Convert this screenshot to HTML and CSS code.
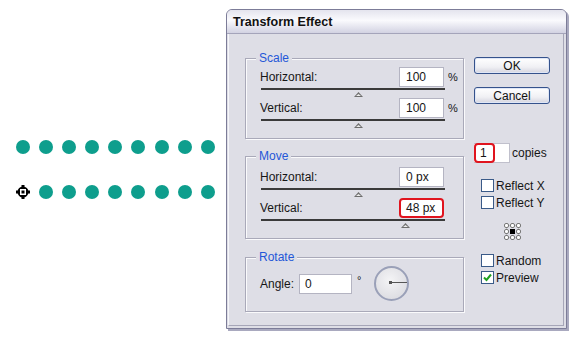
FILE: index.html
```html
<!DOCTYPE html>
<html lang="en">
<head>

    <meta charset="UTF-8">
    <meta name="viewport" content="width=device-width, initial-scale=1.0">
    <title>Transform Effect</title>

    <link rel="stylesheet" href="styles.css">

</head>

<body>

    <div class="page">

        <div class="artboard">
            <div class="dot-row">
                <span class="dot"></span><span class="dot"></span><span class="dot"></span>
                <span class="dot"></span><span class="dot"></span><span class="dot"></span>
                <span class="dot"></span><span class="dot"></span><span class="dot"></span>
            </div>
            <div class="dot-row">
                <span class="origin">
                    <svg width="14" height="14" viewBox="0 0 14 14">
                        <rect x="5.5" y="0" width="3" height="3" fill="#000"/>
                        <rect x="5.5" y="11" width="3" height="3" fill="#000"/>
                        <rect x="0" y="5.5" width="3" height="3" fill="#000"/>
                        <rect x="11" y="5.5" width="3" height="3" fill="#000"/>
                        <circle cx="7" cy="7" r="5.5" fill="#000"/>
                        <rect x="4" y="4" width="6" height="6" fill="#fff"/>
                        <rect x="5.5" y="5.5" width="3" height="3" fill="#000"/>
                    </svg>
                </span>
                <span class="dot"></span><span class="dot"></span><span class="dot"></span>
                <span class="dot"></span><span class="dot"></span><span class="dot"></span>
                <span class="dot"></span><span class="dot"></span>
            </div>
        </div>

        <div class="dialog">

            <div class="title-bar">Transform Effect</div>

            <div class="dialog-body">

                <div class="groups">

                    <div class="group scale-group">
                        <span class="legend">Scale</span>
                        <div class="field">
                            <span class="field-label">Horizontal:</span>
                            <span class="input">100</span>
                            <span class="unit">%</span>
                        </div>
                        <div class="slider"><span class="thumb" style="left: 93px;"></span></div>
                        <div class="field">
                            <span class="field-label">Vertical:</span>
                            <span class="input">100</span>
                            <span class="unit">%</span>
                        </div>
                        <div class="slider"><span class="thumb" style="left: 93px;"></span></div>
                    </div>

                    <div class="group move-group">
                        <span class="legend">Move</span>
                        <div class="field">
                            <span class="field-label">Horizontal:</span>
                            <span class="input">0 px</span>
                            <span class="unit"></span>
                        </div>
                        <div class="slider"><span class="thumb" style="left: 93px;"></span></div>
                        <div class="field">
                            <span class="field-label">Vertical:</span>
                            <span class="input marked">48 px</span>
                            <span class="unit"></span>
                        </div>
                        <div class="slider"><span class="thumb" style="left: 140px;"></span></div>
                    </div>

                    <div class="group rotate-group">
                        <span class="legend">Rotate</span>
                        <div class="angle-row">
                            <span class="field-label">Angle:</span>
                            <span class="input angle-input">0</span>
                            <span class="degree">°</span>
                            <span class="dial"><span class="dial-hand"></span></span>
                        </div>
                    </div>

                </div>

                <div class="side">

                    <button class="button">OK</button>
                    <button class="button cancel">Cancel</button>

                    <div class="copies-row">
                        <span class="copies-input"><span class="copies-mark">1</span></span>
                        <span>copies</span>
                    </div>

                    <div class="checks reflect">
                        <label class="check-row"><span class="check"></span>Reflect X</label>
                        <label class="check-row"><span class="check"></span>Reflect Y</label>
                    </div>

                    <div class="ref-point">
                        <svg width="17" height="17" viewBox="0 0 17 17">
                            <rect x="2.5" y="2.5" width="12" height="12" fill="none" stroke="#a0a0a0" stroke-dasharray="1 1"/>
                            <rect x="0.5" y="0.5" width="4" height="4" rx="1.5" fill="#fff" stroke="#777"/>
                            <rect x="6.5" y="0.5" width="4" height="4" rx="1.5" fill="#fff" stroke="#777"/>
                            <rect x="12.5" y="0.5" width="4" height="4" rx="1.5" fill="#fff" stroke="#777"/>
                            <rect x="0.5" y="6.5" width="4" height="4" rx="1.5" fill="#fff" stroke="#777"/>
                            <rect x="6" y="6" width="5" height="5" fill="#000"/>
                            <rect x="12.5" y="6.5" width="4" height="4" rx="1.5" fill="#fff" stroke="#777"/>
                            <rect x="0.5" y="12.5" width="4" height="4" rx="1.5" fill="#fff" stroke="#777"/>
                            <rect x="6.5" y="12.5" width="4" height="4" rx="1.5" fill="#fff" stroke="#777"/>
                            <rect x="12.5" y="12.5" width="4" height="4" rx="1.5" fill="#fff" stroke="#777"/>
                        </svg>
                    </div>

                    <div class="checks">
                        <label class="check-row"><span class="check"></span>Random</label>
                        <label class="check-row">
                            <span class="check">
                                <svg width="11" height="11" viewBox="0 0 11 11">
                                    <path d="M2 5.5 L4.5 8 L9 2.5" fill="none" stroke="#1fa01f" stroke-width="2"/>
                                </svg>
                            </span>Preview
                        </label>
                    </div>

                </div>

            </div>

        </div>

    </div>

</body>
</html>
```

FILE: styles.css
```css
body {

    margin: 0;
    padding: 0;
    background-color: #fff;
    font-family: "Liberation Sans", Arial, sans-serif;
    font-size: 12px;
    color: #161616;

}

.page {

    display: flex;
    width: 580px;
    height: 338px;

}

/* artboard with the dot rows */

.artboard {

    width: 226px;
    padding-top: 140px;
    display: flex;
    flex-direction: column;
    gap: 31px;

}

.dot-row {

    display: flex;
    gap: 9.2px;
    padding-left: 15.5px;

}

.dot {

    width: 14px;
    height: 14px;
    border-radius: 50%;
    background-color: #0e9e8d;

}

.origin {

    width: 14px;
    height: 14px;
    display: flex;

}

/* dialog window */

.dialog {

    margin-top: 9px;
    width: 339px;
    height: 318px;
    border: 1px solid #7c7c98;
    border-radius: 6px 6px 0 0;
    box-shadow: 2px 2px 0 #a9a9bf;
    background-color: #dedee6;
    display: flex;
    flex-direction: column;

}

.title-bar {

    height: 23px;
    line-height: 24px;
    padding-left: 6px;
    font-size: 12.5px;
    font-weight: bold;
    color: #111;
    border-radius: 5px 5px 0 0;
    border-bottom: 1px solid #a4a4ba;
    background: linear-gradient(#e4e4ee, #fafafd 45%, #d2d2e2);

}

.dialog-body {

    flex: 1;
    display: flex;
    gap: 10px;
    padding: 24px 0 0 16px;
    margin: 0 2px 2px 1px;
    border-left: 1px solid #f6f6fa;
    border-bottom: 1px solid #a6a6b8;
    border-right: 1px solid #a6a6b8;

}

.groups {

    width: 219px;
    display: flex;
    flex-direction: column;

}

.group {

    position: relative;
    box-sizing: border-box;
    border: 1px solid #a9a9b9;
    box-shadow: inset 1px 1px 0 #fafafc, 1px 1px 0 #fafafc;
    padding-top: 8px;

}

.scale-group {

    height: 81px;

}

.move-group {

    height: 83px;
    margin-top: 17px;
    padding-top: 10px;

}

.rotate-group {

    height: 55px;
    margin-top: 18px;
    padding-top: 8px;

}

.legend {

    position: absolute;
    top: -8px;
    left: 10px;
    padding: 0 3px;
    line-height: 14px;
    background-color: #dedee6;
    color: #2457d8;
    font-size: 12px;

}

.field {

    display: flex;
    align-items: center;
    height: 20px;
    padding-left: 14px;

}

.field-label {

    flex: 1;

}

.input {

    box-sizing: border-box;
    width: 45px;
    height: 20px;
    line-height: 18px;
    padding-left: 6px;
    background-color: #fff;
    border: 1px solid #b4b4c2;

}

.input.marked {

    border: 2px solid #e0141e;
    border-radius: 4px;
    line-height: 16px;
    padding-left: 5px;

}

.unit {

    width: 19px;
    padding-left: 4px;
    box-sizing: border-box;
    font-size: 11px;

}

.slider {

    position: relative;
    margin-left: 15px;
    width: 184px;
    height: 10px;

}

.slider::before {

    content: "";
    display: block;
    margin-top: 1px;
    height: 2px;
    background-color: #3a3a3a;

}

.thumb {

    position: absolute;
    top: 4px;
    width: 9px;
    height: 5px;
    background-color: #6e6e6e;
    clip-path: polygon(50% 0, 100% 100%, 0 100%);

}

.thumb::after {

    content: "";
    position: absolute;
    left: 2px;
    top: 2px;
    width: 5px;
    height: 2px;
    background-color: #ececec;
    clip-path: polygon(50% 0, 100% 100%, 0 100%);

}

.angle-row {

    display: flex;
    align-items: center;
    padding-left: 14px;

}

.angle-row .field-label {

    flex: none;

}

.angle-input {

    width: 53px;
    margin-left: 5px;
    padding-left: 5px;

}

.degree {

    margin-left: 5px;
    margin-bottom: 8px;
    font-size: 11px;

}

.dial {

    position: relative;
    box-sizing: border-box;
    margin-left: 13px;
    width: 35px;
    height: 35px;
    border-radius: 50%;
    border: 2px solid #9aa0b8;
    background: radial-gradient(circle at 45% 40%, #f4f4f6, #d6d6dc);

}

.dial-hand {

    position: absolute;
    left: 14px;
    top: 14px;
    width: 17px;
    height: 1px;
    background-color: #555;

}

.dial-hand::before {

    content: "";
    position: absolute;
    left: -1px;
    top: -1px;
    width: 3px;
    height: 3px;
    background-color: #555;

}

/* right column */

.side {

    display: flex;
    flex-direction: column;
    align-items: flex-start;
    margin-top: -1px;

}

.button {

    width: 76px;
    height: 17px;
    padding: 0;
    font-family: "Liberation Sans", Arial, sans-serif;
    font-size: 12px;
    color: #111;
    border: 1px solid #35528c;
    border-radius: 3px;
    background: linear-gradient(#ffffff, #f0f0f4 60%, #d4d4de);
    box-shadow: inset 0 0 0 1px #dfe6f6;

}

.cancel {

    margin-top: 13px;

}

.copies-row {

    display: flex;
    align-items: center;
    gap: 2px;
    margin-top: 39px;

}

.copies-input {

    box-sizing: border-box;
    width: 36px;
    height: 20px;
    background-color: #fff;
    border: 1px solid #c0c0cc;
    border-left: none;

}

.copies-mark {

    display: block;
    box-sizing: border-box;
    width: 21px;
    height: 20px;
    margin-top: -1px;
    line-height: 16px;
    padding-left: 4px;
    border: 2px solid #e0141e;
    border-radius: 4px;

}

.checks {

    display: flex;
    flex-direction: column;
    padding-left: 7px;

}

.reflect {

    margin-top: 14px;

}

.check-row {

    display: flex;
    align-items: center;
    gap: 2px;
    height: 17px;

}

.check {

    box-sizing: border-box;
    width: 13px;
    height: 13px;
    background-color: #fff;
    border: 1px solid #3a5a88;
    display: flex;
    align-items: center;
    justify-content: center;

}

.ref-point {

    margin: 12px 0 0 30px;
    height: 17px;

}

.ref-point svg {

    display: block;

}

.ref-point + .checks {

    margin-top: 12px;

}
```
